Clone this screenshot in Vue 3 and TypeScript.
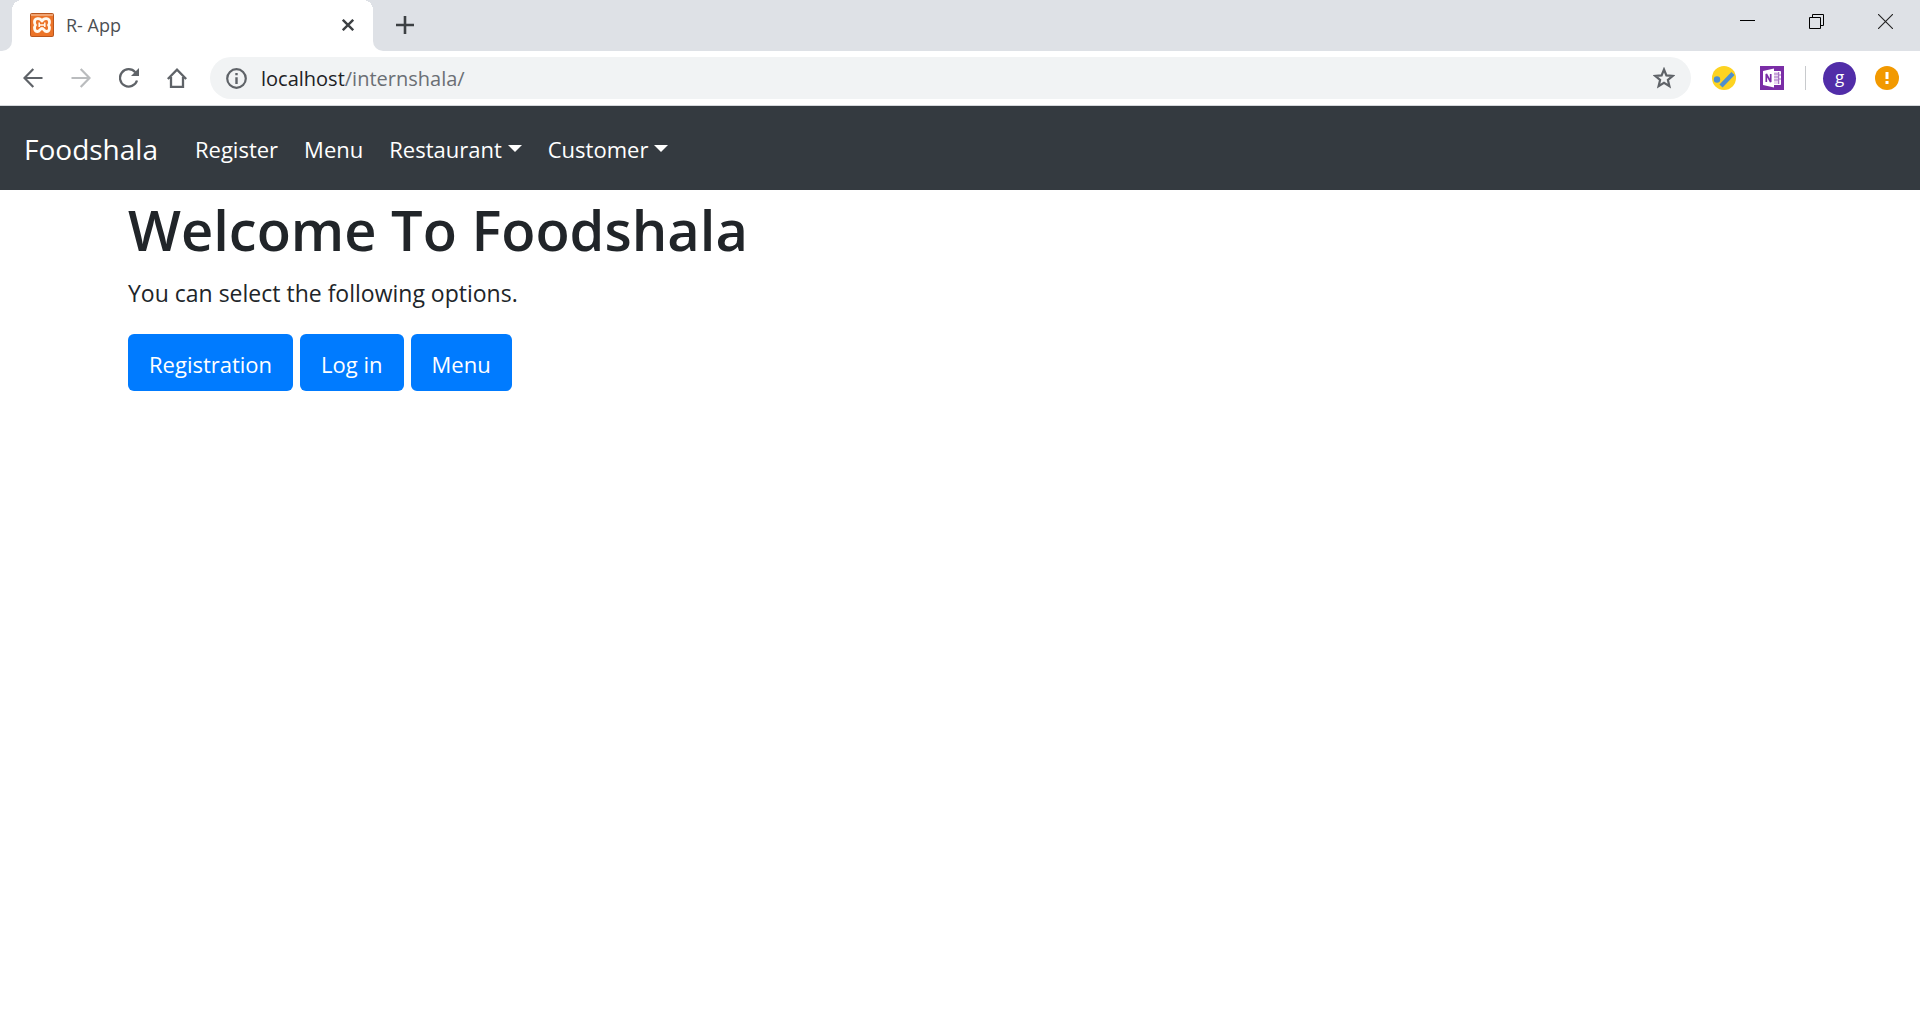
<script setup lang="ts">
import { ref } from 'vue'

interface NavItem {
  label: string
  menu: boolean
}

const navItems: NavItem[] = [
  { label: 'Register', menu: false },
  { label: 'Menu', menu: false },
  { label: 'Restaurant', menu: true },
  { label: 'Customer', menu: true },
]
const options: string[] = ['Registration', 'Log in', 'Menu']
const path = ref<string>('/internshala/')
</script>

<template>
  <div class="window">
    <header class="chrome">
      <div class="tab-strip">
        <div class="edge"></div>
        <div class="tab">
          <svg class="favicon" viewBox="0 0 24 24" aria-hidden="true">
            <rect width="24" height="24" rx="2" fill="#b9561d" />
            <rect x="1" y="2" width="22" height="21" rx="1" fill="#ec7428" />
            <rect x="1" y="1" width="22" height="2" fill="#f0a472" />
            <path d="M12 8C10 4.500 4.500 5 4.500 9c0 2 .5 2.600 1 3-1.500 2-1.500 6.500 2 6.500 2.500 0 2.500-3 4.500-3s2 3 4.500 3c3.500 0 3.500-4.500 2-6.500.5-.4 1-1 1-3 0-4-5.500-4.500-7.500-1Z" fill="none" stroke="#fffaf0" stroke-width="2.800" stroke-linejoin="round" />
            <path d="M9.200 9.500v4.500M14.800 9.500v4.500M9.200 12h5.600" stroke="#fffaf0" stroke-width="1.500" />
          </svg>
          <span class="tab-title">R- App</span>
          <button class="icon-button close" aria-label="Close tab">
            <svg width="12" height="12" viewBox="0 0 12 12"><path d="M.8.8l10.400 10.400M11.200.8L.8 11.200" stroke="#3c4043" stroke-width="2.400" /></svg>
          </button>
        </div>
        <div class="strip-rest">
          <button class="icon-button" aria-label="New tab">
            <svg width="18" height="18" viewBox="0 0 18 18"><path d="M9 0v18M0 9h18" stroke="#3c4043" stroke-width="2.600" /></svg>
          </button>
          <div class="window-controls">
            <button class="icon-button" aria-label="Minimize">
              <svg width="15" height="15" viewBox="0 0 15 15"><path d="M0 6.500h15" stroke="#000" /></svg>
            </button>
            <button class="icon-button" aria-label="Restore">
              <svg width="15" height="15" viewBox="0 0 15 15" fill="none" stroke="#000"><path d="M.5 3.500h11v11H.5zM3.500 3.500v-3h11v11h-3" /></svg>
            </button>
            <button class="icon-button" aria-label="Close window">
              <svg width="15" height="15" viewBox="0 0 15 15"><path d="M0 0l15 15M15 0L0 15" stroke="#222" stroke-width="1.100" /></svg>
            </button>
          </div>
        </div>
      </div>

      <div class="toolbar">
        <div class="history">
          <button class="icon-button" aria-label="Back">
            <svg width="20" height="20" viewBox="0 0 20 20" fill="none" stroke="#5f6368" stroke-width="2.200"><path d="M19.500 10H1.500M10.300 1L1.500 10l8.800 9" /></svg>
          </button>
          <button class="icon-button" aria-label="Forward">
            <svg width="20" height="20" viewBox="0 0 20 20" fill="none" stroke="#babcbe" stroke-width="2.200"><path d="M.5 10h18M9.700 1l8.800 9-8.800 9" /></svg>
          </button>
          <button class="icon-button" aria-label="Reload">
            <svg width="20" height="20" viewBox="0 0 20 20"><path d="M18 12.500A8.700 8.700 0 1 1 16.300 4.200" fill="none" stroke="#5f6368" stroke-width="2.300" /><path d="M20 0v8h-8z" fill="#5f6368" /></svg>
          </button>
          <button class="icon-button" aria-label="Home">
            <svg width="20" height="20" viewBox="0 0 20 20" fill="none" stroke="#5f6368" stroke-width="2.300"><path d="M.8 11L10 1.700 19.200 11M4 9v9.800h12V9" /></svg>
          </button>
        </div>
        <div class="address">
          <svg width="21" height="21" viewBox="0 0 21 21" aria-hidden="true"><circle cx="10.500" cy="10.500" r="9.300" fill="none" stroke="#5f6368" stroke-width="2.200" /><path d="M10.500 9.200V16M10.500 5v2.200" stroke="#5f6368" stroke-width="2.400" /></svg>
          <div class="url">
            <label for="address-path">localhost</label>
            <input id="address-path" v-model="path" type="text" spellcheck="false" />
          </div>
          <button class="icon-button" aria-label="Bookmark this page">
            <svg width="22" height="22" viewBox="0 0 22 22"><path d="M11 2.500l2.400 5.900 6.300.5-4.800 4.100 1.500 6.200L11 15.900l-5.400 3.300 1.500-6.200-4.800-4.100 6.300-.5z" fill="none" stroke="#5f6368" stroke-width="2.200" /></svg>
          </button>
        </div>
        <div class="extensions">
          <button class="icon-button" aria-label="Tasks extension">
            <svg width="24" height="24" viewBox="0 0 24 24"><circle cx="12" cy="12" r="12" fill="#fdd321" /><circle cx="5" cy="13.500" r="3.200" fill="#4e8fce" /><path d="M9 20L21 7.500" stroke="#4e8fce" stroke-width="4.400" /></svg>
          </button>
          <button class="icon-button" aria-label="Notes clipper">
            <svg width="24" height="24" viewBox="0 0 24 24"><rect width="24" height="24" fill="#7a2da6" /><path d="M13 5.500h7.500v13H13" fill="#e9d8f0" stroke="#fff" /><path d="M14 8h4M14 11h4M14 14h4M18.500 6v12M19 9h2M19 13h2" stroke="#a673c4" /><path d="M3 5l11-2.500v19L3 19z" fill="#fff" /><path d="M6.300 16V8l4.400 8V8" fill="none" stroke="#7a2da6" stroke-width="1.700" /></svg>
          </button>
        </div>
        <span class="divider"></span>
        <button class="icon-button avatar" aria-label="Profile g">g</button>
        <button class="icon-button alert" aria-label="Update available">
          <svg width="24" height="24" viewBox="0 0 24 24"><circle cx="12" cy="12" r="12" fill="#f29900" /><path d="M12 6v7M12 15v3" stroke="#fff" stroke-width="3" /></svg>
        </button>
      </div>
    </header>

    <nav class="navbar">
      <a class="brand" href="#">Foodshala</a>
      <a v-for="item in navItems" :key="item.label" class="nav-link" :class="{ dropdown: item.menu }" href="#">{{ item.label }}</a>
    </nav>

    <main class="content">
      <h1>Welcome To Foodshala</h1>
      <p>You can select the following options.</p>
      <div class="options">
        <button v-for="option in options" :key="option" class="option">{{ option }}</button>
      </div>
    </main>
  </div>
</template>

<style>
body {
  margin: 0;
  background: #fff;
}
</style>

<style scoped>
.window {
  min-height: 100vh;
  color: #212529;
  font-family: "Open Sans", "Noto Sans", sans-serif;
}
button {
  margin: 0;
  border: 0;
  font-family: inherit;
  cursor: pointer;
}
.icon-button {
  display: flex;
  flex: none;
  align-items: center;
  justify-content: center;
  padding: 0;
  background: none;
}
.chrome {
  border-bottom: 1px solid #d5d8dc;
}
.tab-strip {
  display: flex;
  height: 51px;
}
.edge {
  width: 12px;
  background: #dee1e6;
  border-bottom-right-radius: 10px;
}
.tab {
  position: relative;
  display: flex;
  box-sizing: border-box;
  width: 361px;
  align-items: center;
  padding: 0 19px 2px 18px;
  background: #fff;
}
.tab::before,
.tab::after {
  position: absolute;
  top: 0;
  width: 10px;
  height: 10px;
  content: "";
}
.tab::before {
  left: 0;
  background: radial-gradient(circle at 100% 100%, #fff 10px, #dee1e6 10px);
}
.tab::after {
  right: 0;
  background: radial-gradient(circle at 0 100%, #fff 10px, #dee1e6 10px);
}
.favicon {
  width: 24px;
  height: 24px;
}
.tab-title {
  flex: 1;
  margin-left: 12px;
  color: #4c5054;
  font-size: 18px;
  font-weight: 400;
  line-height: 24px;
}
.strip-rest {
  display: flex;
  box-sizing: border-box;
  flex: 1;
  align-items: center;
  padding: 0 0 2px 23px;
  background: #dee1e6;
  border-bottom-left-radius: 10px;
}
.window-controls {
  display: flex;
  height: 42px;
  align-self: flex-start;
  margin-left: auto;
}
.window-controls .icon-button {
  width: 69px;
}
.toolbar {
  display: flex;
  height: 54px;
  align-items: center;
  padding: 0 21px 0 23px;
}
.history {
  display: flex;
  gap: 28px;
}
.address {
  display: flex;
  height: 42px;
  flex: 1;
  align-items: center;
  margin-left: 23px;
  padding: 0 16px;
  border-radius: 21px;
  background: #f1f3f4;
}
.url {
  display: flex;
  flex: 1;
  align-items: center;
  margin-left: 14px;
  color: #202124;
  font-size: 20px;
}
.url input {
  min-width: 0;
  flex: 1;
  padding: 0;
  border: 0;
  outline: 0;
  background: none;
  color: #6b6f74;
  font: inherit;
}
.extensions {
  display: flex;
  gap: 24px;
  margin-left: 21px;
}
.divider {
  width: 1px;
  height: 24px;
  margin: 0 17px 0 21px;
  background: #c8cacd;
}
.avatar {
  box-sizing: border-box;
  width: 33px;
  height: 33px;
  padding-bottom: 4px;
  border-radius: 50%;
  background: #512da8;
  color: #fff;
  font-size: 17px;
}
.alert {
  margin-left: 19px;
}
.navbar {
  display: flex;
  box-sizing: border-box;
  min-height: 84px;
  align-items: center;
  padding: 2px 24px 0;
  background: #343a40;
}
.brand,
.nav-link {
  color: #fff;
  line-height: 36px;
  text-decoration: none;
}
.brand {
  margin-right: 24px;
  font-size: 28px;
}
.nav-link {
  padding: 0 13px;
  font-size: 22px;
}
.dropdown::after {
  display: inline-block;
  margin-left: 6px;
  border-top: 7px solid #fff;
  border-right: 7px solid transparent;
  border-left: 7px solid transparent;
  vertical-align: 6px;
  content: "";
}
.content {
  padding: 3px 128px;
}
h1 {
  margin: 0 0 10px;
  font-size: 56px;
  font-weight: 600;
  line-height: 72px;
}
p {
  margin: 0 0 23px;
  font-size: 23px;
  line-height: 36px;
}
.options {
  display: flex;
  gap: 7px;
}
.option {
  padding: 12px 21px 9px;
  border-radius: 6px;
  background: #007bff;
  color: #fff;
  font-size: 22px;
  line-height: 36px;
}
</style>
